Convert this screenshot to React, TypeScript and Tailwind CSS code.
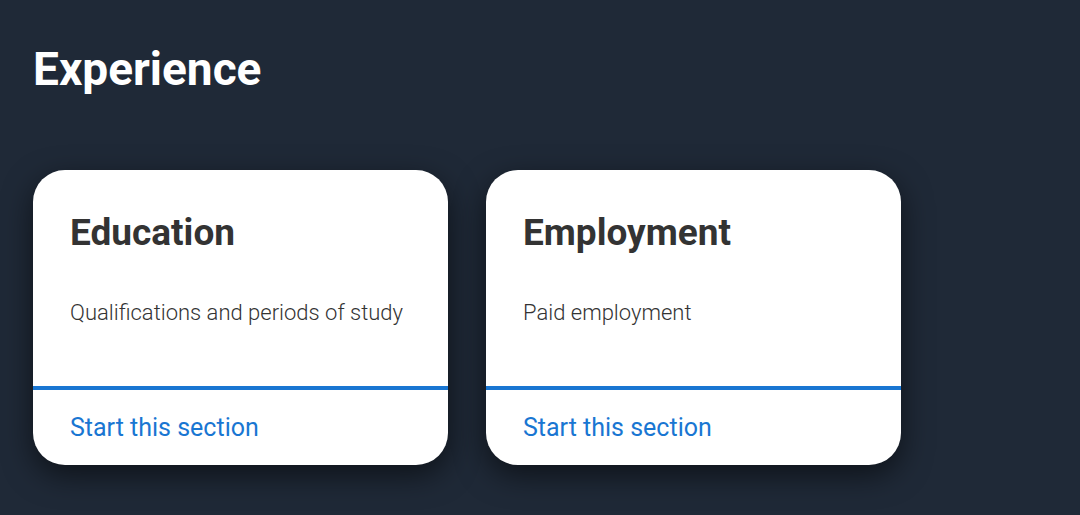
const sections = [
  { title: "Education", text: "Qualifications and periods of study" },
  { title: "Employment", text: "Paid employment" },
];

const SectionCard = ({ title, text }: { title: string; text: string }) => (
  <div className="w-[415px] h-[295px] bg-white rounded-[32px] overflow-hidden flex flex-col shadow-[0_10px_30px_rgba(0,0,0,0.55)]">
    <div className="px-[37px] pt-[41px] pb-[59px] border-b-4 border-[#1976d2]">
      <h3 className="text-[37px] leading-[44px] font-bold text-[#333333]">{title}</h3>
      <p className="mt-[44px] text-[22px] leading-[28px] font-light text-[#333333]">{text}</p>
    </div>
    <div className="px-[37px] pt-[22px]">
      <a href="#" className="text-[25px] leading-[32px] text-[#1976d2]">
        Start this section
      </a>
    </div>
  </div>
);

export default function App() {
  return (
    <div
      className="w-[1080px] h-[515px] bg-[#1f2937] px-[33px] pt-[41px]"
      style={{ fontFamily: "Roboto, 'Liberation Sans', sans-serif" }}
    >
      <h2 className="text-[46px] leading-[56px] font-bold text-white">Experience</h2>
      <div className="mt-[73px] flex gap-[38px]">
        {sections.map((s) => (
          <SectionCard key={s.title} title={s.title} text={s.text} />
        ))}
      </div>
    </div>
  );
}
